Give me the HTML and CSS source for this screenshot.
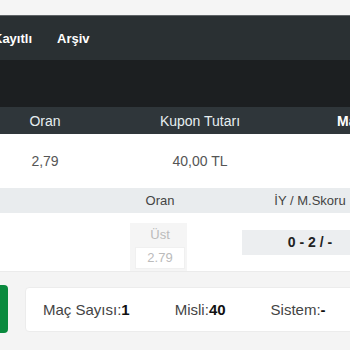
FILE: index.html
```html
<!DOCTYPE html>
<html lang="tr">
<head>
  <meta charset="UTF-8" />
  <meta name="viewport" content="width=device-width, initial-scale=1.0"/>
  <title>Kupon Detayı</title>
  <link rel="stylesheet" href="styles.css">
</head>
<body>
<div class="topbar"></div>
<nav class="nav">
  <a class="nav-item">Kayıtlı</a>
  <a class="nav-item">Arşiv</a>
</nav>
<div class="subbar"></div>

<div class="coupon-head">
  <div>Oran</div>
  <div>Kupon Tutarı</div>
  <div>Maks. Kazanç</div>
</div>
<div class="coupon-row">
  <div>2,79</div>
  <div>40,00 TL</div>
  <div></div>
</div>

<div class="event-head">
  <div></div>
  <div>Oran</div>
  <div>İY / M.Skoru</div>
</div>
<div class="event-row">
  <div></div>
  <div class="odd-box">
    <div class="odd-name">Üst</div>
    <div class="odd-value">2.79</div>
  </div>
  <div class="score-box">0 - 2 / -</div>
</div>

<div class="summary">
  <button class="play-btn" aria-label="Oyna"></button>
  <div class="summary-card">
    <span>Maç Sayısı:<b>1</b></span>
    <span>Misli:<b>40</b></span>
    <span>Sistem:<b>-</b></span>
  </div>
</div>
</body>
</html>
```

FILE: styles.css
```css
html, body {
  margin: 0;
  width: 350px;
  height: 350px;
  overflow: hidden;
  font-family: "Liberation Sans", Arial, sans-serif;
  background-color: #f4f4f4;
}
.topbar {
  height: 15px;
  background-color: #f5f5f5;
  border-bottom: 1px solid #5f6467;
}
.nav {
  display: flex;
  align-items: center;
  height: 44px;
  background-color: #2a3033;
  margin-left: -7px;
  gap: 25px;
}
.nav-item {
  color: #fff;
  font-size: 13px;
  font-weight: bold;
}
.subbar {
  height: 47px;
  background-color: #1c1f21;
}
.coupon-head, .coupon-row {
  display: grid;
  grid-template-columns: 90px 220px 134px;
  width: 444px;
  font-size: 14px;
  text-align: center;
  align-items: center;
}
.coupon-head {
  height: 27px;
  background-color: #2f363a;
  color: #e6eef0;
}
.coupon-head div:last-child {
  text-align: left;
  padding-left: 27px;
  color: #fff;
  font-weight: bold;
}
.coupon-row {
  height: 54px;
  background-color: #fff;
  color: #555;
}
.event-head, .event-row {
  display: grid;
  width: 378px;
  align-items: center;
  font-size: 13px;
  text-align: center;
}
.event-head {
  grid-template-columns: 133px 54px 55px 136px;
  height: 25px;
  background-color: #e9ecee;
  color: #444;
}
.event-head div:last-child {
  grid-column: 4;
}
.event-row {
  grid-template-columns: 130px 57px 55px 136px;
  height: 58px;
  background-color: #fff;
  border-bottom: 1px solid #ebebeb;
}
.odd-box {
  grid-column: 2;
  align-self: start;
  margin-top: 10px;
  padding: 0 2px 2px 5px;
  background-color: #f5f5f5;
  color: #bbb;
}
.odd-name {
  line-height: 24px;
}
.odd-value {
  background-color: #fff;
  border: 1px solid #f0f0f0;
  line-height: 20px;
}
.score-box {
  grid-column: 4;
  height: 25px;
  line-height: 25px;
  background-color: #eceef0;
  color: #222;
  font-size: 14px;
  font-weight: bold;
}
.summary {
  display: flex;
  align-items: flex-start;
  gap: 17px;
  padding-top: 13px;
}
.play-btn {
  width: 40px;
  height: 48px;
  margin-left: -32px;
  border: none;
  border-radius: 4px;
  background-color: #0a8a3e;
  flex-shrink: 0;
}
.summary-card {
  display: flex;
  align-items: center;
  gap: 45px;
  width: 360px;
  height: 43px;
  margin-top: 2px;
  padding-left: 17px;
  background-color: #fff;
  border: 1px solid #ececec;
  border-radius: 4px;
  font-size: 15px;
  color: #444;
  flex-shrink: 0;
}
.summary-card b {
  color: #111;
}
```
